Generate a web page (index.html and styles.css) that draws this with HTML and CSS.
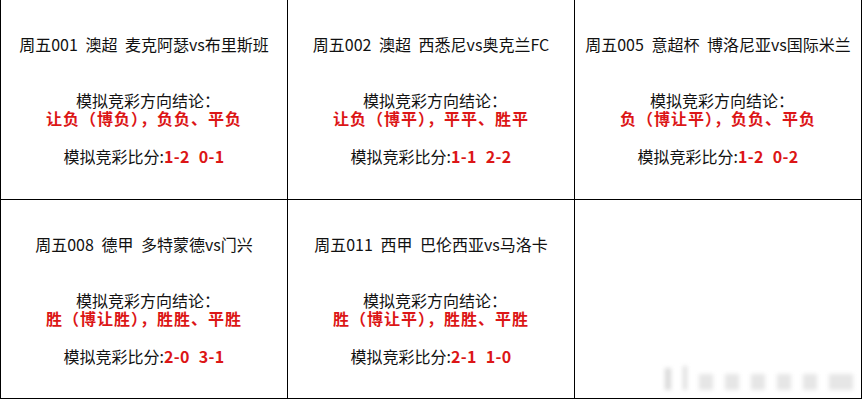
FILE: index.html
```html
<!DOCTYPE html>
<html lang="zh">
<head>
<meta charset="utf-8">
<link rel="stylesheet" href="styles.css">
</head>
<body>
<div class="grid">
  <div class="cell">
    <div class="title">周五001 澳超 麦克阿瑟vs布里斯班</div>
    <div class="label">模拟竞彩方向结论：</div>
    <div class="pick">让负（博负），负负、平负</div>
    <div class="score">模拟竞彩比分:<b>1-2 0-1</b></div>
  </div>
  <div class="cell">
    <div class="title">周五002 澳超 西悉尼vs奥克兰FC</div>
    <div class="label">模拟竞彩方向结论：</div>
    <div class="pick">让负（博平），平平、胜平</div>
    <div class="score">模拟竞彩比分:<b>1-1 2-2</b></div>
  </div>
  <div class="cell">
    <div class="title">周五005 意超杯 博洛尼亚vs国际米兰</div>
    <div class="label">模拟竞彩方向结论：</div>
    <div class="pick">负（博让平），负负、平负</div>
    <div class="score">模拟竞彩比分:<b>1-2 0-2</b></div>
  </div>
  <div class="cell">
    <div class="title">周五008 德甲 多特蒙德vs门兴</div>
    <div class="label">模拟竞彩方向结论：</div>
    <div class="pick">胜（博让胜），胜胜、平胜</div>
    <div class="score">模拟竞彩比分:<b>2-0 3-1</b></div>
  </div>
  <div class="cell">
    <div class="title">周五011 西甲 巴伦西亚vs马洛卡</div>
    <div class="label">模拟竞彩方向结论：</div>
    <div class="pick">胜（博让平），胜胜、平胜</div>
    <div class="score">模拟竞彩比分:<b>2-1 1-0</b></div>
  </div>
  <div class="cell empty">
    <div class="mark">
      <span class="m1"></span><span class="m2"></span><span class="m3"></span><span class="m3"></span><span class="m3"></span><span class="m3"></span><span class="m3"></span><span class="m4"></span>
    </div>
  </div>
</div>
</body>
</html>
```

FILE: styles.css
```css
html, body {
  margin: 0;
  padding: 0;
  background: #ffffff;
}

body {
  font-family: "Noto Sans CJK SC", "Noto Sans", sans-serif;
  font-size: 16px;
  color: #111;
}

.grid {
  display: grid;
  grid-template-columns: repeat(3, 287px);
  grid-template-rows: 200px 199px;
  width: 864px;
  border-left: 1px solid #000;
}

.cell {
  border-right: 1px solid #000;
  border-bottom: 1px solid #000;
  display: flex;
  flex-direction: column;
  align-items: center;
  padding-top: 34px;
  text-align: center;
}

.title {
  line-height: 20px;
  white-space: nowrap;
  word-spacing: 4px;
}

.label {
  margin-top: 37px;
  line-height: 18px;
  padding-left: 8px;
}

.pick {
  line-height: 18px;
  font-weight: bold;
  color: #dc1616;
  letter-spacing: 1px;
}

.score {
  margin-top: 20px;
  line-height: 18px;
}

.score b {
  color: #dc1616;
  font-weight: bold;
  word-spacing: 5px;
  letter-spacing: 0.3px;
}

.empty {
  justify-content: flex-end;
  align-items: flex-end;
  padding: 0 8px 8px 0;
}

.mark {
  display: flex;
  align-items: flex-end;
  gap: 12px;
  filter: blur(2px);
}

.mark span {
  display: block;
  background: #e6e6e6;
  height: 16px;
  width: 14px;
}

.mark .m1 {
  width: 6px;
  height: 22px;
  background: #dadada;
}

.mark .m2 {
  width: 4px;
  height: 24px;
  background: #dedede;
}

.mark .m4 {
  width: 24px;
}
```
